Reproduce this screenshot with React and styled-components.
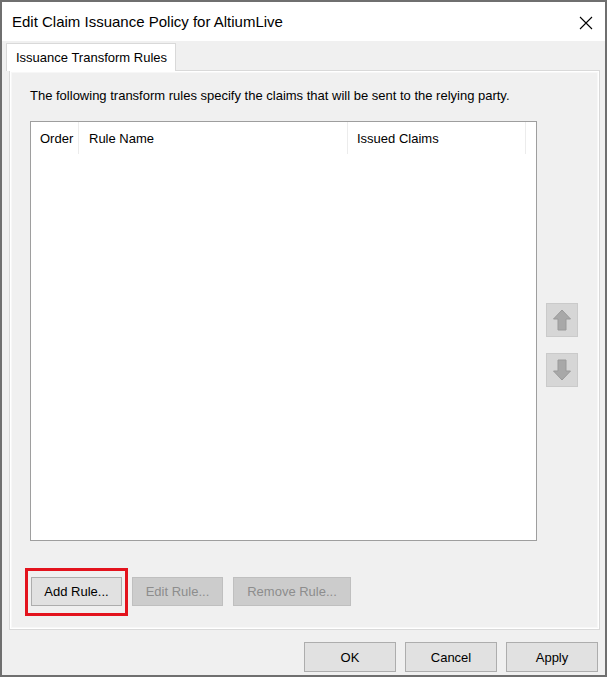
import React from 'react';
import styled, { createGlobalStyle } from 'styled-components';

const GlobalStyle = createGlobalStyle`
  html, body {
    margin: 0;
    padding: 0;
    background: #ffffff;
  }
  body {
    font-family: 'Liberation Sans', Arial, sans-serif;
    color: #000;
  }
`;

const Window = styled.div`
  width: 607px;
  height: 677px;
  box-sizing: border-box;
  border: 2px solid #6f6f6f;
  display: flex;
  flex-direction: column;
  background: #f0f0f0;
`;

const TitleBar = styled.div`
  height: 39px;
  flex: none;
  background: #fff;
  display: flex;
  align-items: center;
  justify-content: space-between;
  padding: 0 12px 0 10px;
  font-size: 15px;
`;

const CloseButton = styled.div`
  width: 14px;
  height: 14px;
  display: flex;
  margin-top: 2px;
`;

const Body = styled.div`
  flex: 1;
  display: flex;
  flex-direction: column;
  padding: 2px 5px 0 7px;
`;

const TabStrip = styled.div`
  display: flex;
  height: 27px;
  margin-left: -3px;
`;

const Tab = styled.div`
  background: #fff;
  border: 1px solid #d9d9d9;
  border-bottom: none;
  padding: 0 8px 0 9px;
  display: flex;
  align-items: center;
  font-size: 13px;
  position: relative;
  z-index: 1;
  margin-bottom: -1px;
`;

const Panel = styled.div`
  height: 560px;
  box-sizing: border-box;
  border: 1px solid #d9d9d9;
  box-shadow: inset 0 0 0 1px #ffffff, inset 0 0 0 2px #f7f7f7;
  display: flex;
  flex-direction: column;
  padding: 17px 21px 0 20px;
`;

const Description = styled.div`
  font-size: 13px;
  line-height: 16px;
  height: 16px;
`;

const ListRow = styled.div`
  display: flex;
  margin-top: 17px;
`;

const ListBox = styled.div`
  width: 507px;
  height: 420px;
  box-sizing: border-box;
  border: 1px solid #9e9e9e;
  background: #fff;
`;

const HeaderRow = styled.div`
  display: flex;
  height: 32px;
`;

const HeaderCell = styled.div`
  width: ${(p) => p.$width}px;
  box-sizing: border-box;
  padding-left: ${(p) => p.$pad}px;
  border-right: 1px solid #ececec;
  display: flex;
  align-items: center;
  font-size: 13px;
`;

const ArrowColumn = styled.div`
  display: flex;
  flex-direction: column;
  gap: 16px;
  margin-left: 9px;
  padding-top: 182px;
`;

const ArrowButton = styled.div`
  width: 32px;
  height: 34px;
  box-sizing: border-box;
  background: #d6d6d6;
  border: 1px solid #cacaca;
  display: flex;
  align-items: center;
  justify-content: center;
`;

const ButtonRow = styled.div`
  display: flex;
  gap: 10px;
  margin-top: 36px;
  margin-left: 1px;
`;

const Highlight = styled.div`
  position: relative;
  &::after {
    content: '';
    position: absolute;
    left: -6px;
    top: -9px;
    right: -6px;
    bottom: -10px;
    border: 3px solid #e3131d;
    pointer-events: none;
  }
`;

const Button = styled.div`
  width: ${(p) => p.$width}px;
  height: 29px;
  box-sizing: border-box;
  background: ${(p) => (p.$disabled ? '#cccccc' : '#e1e1e1')};
  border: 1px solid ${(p) => (p.$disabled ? '#bfbfbf' : '#adadad')};
  color: ${(p) => (p.$disabled ? '#8d8d8d' : '#000')};
  display: flex;
  align-items: center;
  justify-content: center;
  font-size: 13px;
`;

const Footer = styled.div`
  display: flex;
  justify-content: flex-end;
  gap: 9px;
  padding: 12px 2px 0 0;
`;

const FooterButton = styled(Button)`
  width: 92px;
  height: 30px;
`;

const Arrow = ({ down }) => (
  <svg width="20" height="24" viewBox="0 0 20 24" style={{ transform: down ? 'rotate(180deg)' : 'none' }}>
    <path
      d="M10 2 L18.5 11 L14 11 L14 22 L6 22 L6 11 L1.5 11 Z"
      fill="#a8a8a8"
      stroke="#9a9a9a"
      strokeWidth="1"
      strokeLinejoin="round"
    />
  </svg>
);

const App = () => (
  <>
    <GlobalStyle />
    <Window>
      <TitleBar>
        <span>Edit Claim Issuance Policy for AltiumLive</span>
        <CloseButton>
          <svg width="14" height="14" viewBox="0 0 14 14">
            <path d="M1 1 L13 13 M13 1 L1 13" stroke="#000" strokeWidth="1.1" />
          </svg>
        </CloseButton>
      </TitleBar>
      <Body>
        <TabStrip>
          <Tab>Issuance Transform Rules</Tab>
        </TabStrip>
        <Panel>
          <Description>
            The following transform rules specify the claims that will be sent to the relying party.
          </Description>
          <ListRow>
            <ListBox>
              <HeaderRow>
                <HeaderCell $width={48} $pad={9}>Order</HeaderCell>
                <HeaderCell $width={269} $pad={10}>Rule Name</HeaderCell>
                <HeaderCell $width={178} $pad={9}>Issued Claims</HeaderCell>
              </HeaderRow>
            </ListBox>
            <ArrowColumn>
              <ArrowButton>
                <Arrow />
              </ArrowButton>
              <ArrowButton>
                <Arrow down />
              </ArrowButton>
            </ArrowColumn>
          </ListRow>
          <ButtonRow>
            <Highlight>
              <Button $width={91}>Add Rule...</Button>
            </Highlight>
            <Button $width={91} $disabled>Edit Rule...</Button>
            <Button $width={118} $disabled>Remove Rule...</Button>
          </ButtonRow>
        </Panel>
        <Footer>
          <FooterButton>OK</FooterButton>
          <FooterButton>Cancel</FooterButton>
          <FooterButton>Apply</FooterButton>
        </Footer>
      </Body>
    </Window>
  </>
);

export default App;
